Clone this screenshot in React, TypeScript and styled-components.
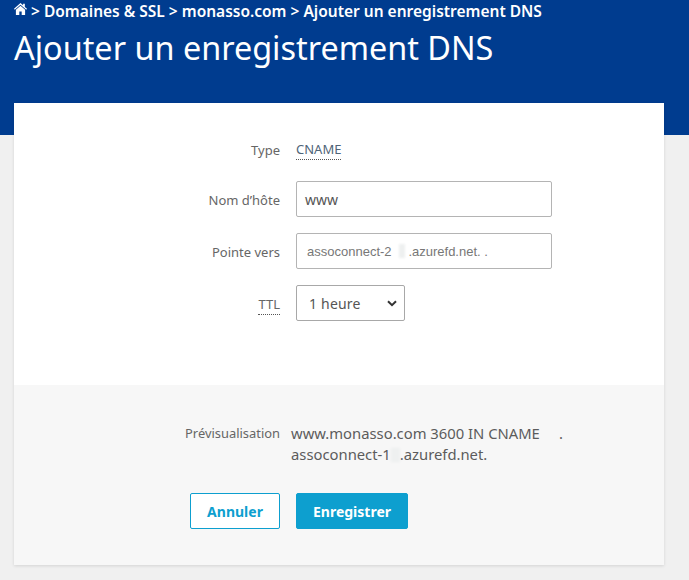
import React from "react";
import styled, { createGlobalStyle } from "styled-components";

const GlobalStyle = createGlobalStyle`
    html, body { margin: 0; padding: 0; background: #f0f0f0; }
    body { font-family: "Noto Sans", "Open Sans", sans-serif; color: #5a5a5a; }
    * { box-sizing: border-box; }
`;

const Page = styled.div`
    width: 689px;
    height: 580px;
    overflow: hidden;
    background: #f0f0f0;
`;

const Header = styled.header`
    height: 135px;
    background: #003c8f;
    color: #fff;
    padding: 1px 14px 0;
`;

const Breadcrumb = styled.div`
    display: flex;
    align-items: center;
    gap: 4px;
    height: 20px;
    font-size: 15.5px;
    font-weight: 600;
    white-space: pre;
`;

const Title = styled.h1`
    margin: 4px 0 0;
    font-size: 32.4px;
    line-height: 44px;
    font-weight: 400;
`;

const Card = styled.main`
    width: 650px;
    height: 462px;
    margin: -32px 0 0 14px;
    background: #fff;
    box-shadow: 0 1px 3px rgba(0, 0, 0, 0.12);
    display: flex;
    flex-direction: column;
`;

const Form = styled.section`
    height: 282px;
    padding-top: 35px;
`;

const Row = styled.div<{ $height: number; $mb: number }>`
    display: grid;
    grid-template-columns: 266px 1fr;
    column-gap: 16px;
    align-items: center;
    height: ${(p) => p.$height}px;
    margin-bottom: ${(p) => p.$mb}px;
`;

const Label = styled.div<{ $flush?: boolean }>`
    text-align: right;
    font-size: 13px;
    padding-top: ${(p) => (p.$flush ? 0 : 1)}px;
    padding-bottom: ${(p) => (p.$flush ? 1 : 0)}px;
    color: #666;
`;

const Dotted = styled.span`
    border-bottom: 1px dotted #555;
    padding-bottom: 1px;
`;

const Value = styled(Dotted)`
    justify-self: start;
    font-size: 13px;
    color: #4f6478;
`;

const Field = styled.div<{ $small?: boolean }>`
    display: flex;
    align-items: center;
    width: 256px;
    height: 36px;
    padding: ${(p) => (p.$small ? "0 10px" : "0 8px")};
    background: #fff;
    border: 1px solid #b4b4b4;
    border-radius: 2px;
    font-family: ${(p) => (p.$small ? '"Liberation Sans", Arial' : '"Noto Sans"')}, sans-serif;
    font-size: ${(p) => (p.$small ? 13 : 14)}px;
    color: ${(p) => (p.$small ? "#777" : "#555")};
    white-space: pre;
`;

const Smudge = styled.span<{ $w: number }>`
    display: inline-block;
    width: ${(p) => p.$w}px;
    height: 14px;
    vertical-align: -2px;
    background: #eef0f0;
    filter: blur(1px);
`;

const Select = styled.div`
    display: flex;
    align-items: center;
    justify-content: space-between;
    width: 109px;
    height: 36px;
    padding: 0 7px 0 12px;
    border: 1px solid #a8a8a8;
    border-radius: 2px;
    font-size: 14px;
    letter-spacing: 0.2px;
    color: #555;
`;

const Footer = styled.section`
    flex: 1;
    background: #f7f7f7;
    padding-top: 38px;
`;

const PreviewRow = styled.div`
    display: grid;
    grid-template-columns: 266px 1fr;
    column-gap: 11px;
    align-items: start;
`;

const PreviewLabel = styled.div`
    text-align: right;
    font-size: 12.9px;
    line-height: 18px;
    margin-top: 1px;
    color: #666;
`;

const PreviewText = styled.div`
    font-size: 14.8px;
    line-height: 21px;
    color: #5c5c5c;
    white-space: pre;
`;

const Actions = styled.div`
    display: flex;
    gap: 16px;
    margin: 28px 0 0 176px;
`;

const Button = styled.button<{ $primary?: boolean }>`
    height: 36px;
    width: ${(p) => (p.$primary ? 112 : 90)}px;
    padding: 0;
    border: 1px solid #0d9fcf;
    border-radius: 2px;
    background: ${(p) => (p.$primary ? "#0d9fcf" : "#fff")};
    color: ${(p) => (p.$primary ? "#fff" : "#0d9fcf")};
    font-family: "Noto Sans", sans-serif;
    font-size: 14px;
    font-weight: 700;
`;

function HomeIcon() {
    return (
        <svg width="13" height="12" viewBox="0 0 24 22" fill="#fff" style={{ marginTop: -5 }}>
            <path d="M12 0 0 10.6l1.4 1.6L12 3l10.6 9.2 1.4-1.6-4-3.5V1.5h-3.2v2.8z" />
            <path d="M12 5 3.5 12.4V22h6.3v-6.5h4.4V22h6.3v-9.6z" />
        </svg>
    );
}

function Chevron() {
    return (
        <svg width="10" height="7" viewBox="0 0 10 7" fill="none" stroke="#333" strokeWidth="2">
            <path d="M1 1.2 5 5.2 9 1.2" />
        </svg>
    );
}

export default function App() {
    return (
        <Page>
            <GlobalStyle />
            <Header>
                <Breadcrumb>
                    <HomeIcon />
                    {"> Domaines & SSL > monasso.com > Ajouter un enregistrement DNS"}
                </Breadcrumb>
                <Title>Ajouter un enregistrement DNS</Title>
            </Header>
            <Card>
                <Form>
                    <Row $height={24} $mb={19}>
                        <Label $flush>Type</Label>
                        <Value>CNAME</Value>
                    </Row>
                    <Row $height={36} $mb={16}>
                        <Label>Nom d’hôte</Label>
                        <Field>www</Field>
                    </Row>
                    <Row $height={36} $mb={16}>
                        <Label>Pointe vers</Label>
                        <Field $small>assoconnect-2  <Smudge $w={6} /> .azurefd.net. .</Field>
                    </Row>
                    <Row $height={36} $mb={0}>
                        <Label><Dotted>TTL</Dotted></Label>
                        <Select>1 heure<Chevron /></Select>
                    </Row>
                </Form>
                <Footer>
                    <PreviewRow>
                        <PreviewLabel>Prévisualisation</PreviewLabel>
                        <PreviewText>
                            {"www.monasso.com 3600 IN CNAME     ."}
                            <br />
                            assoconnect-1<Smudge $w={9} />.azurefd.net.
                        </PreviewText>
                    </PreviewRow>
                    <Actions>
                        <Button>Annuler</Button>
                        <Button $primary>Enregistrer</Button>
                    </Actions>
                </Footer>
            </Card>
        </Page>
    );
}
